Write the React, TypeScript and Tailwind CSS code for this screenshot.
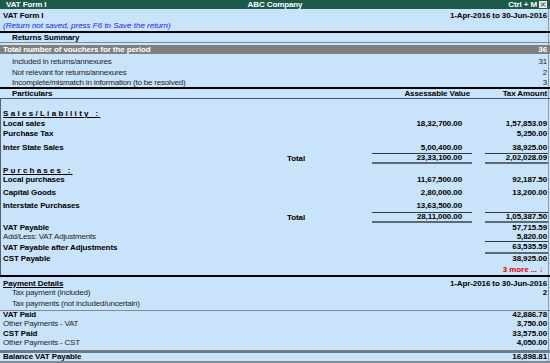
import React from "react";

const B = "font-bold tracking-[-0.1px] text-black";
const R = "font-normal tracking-[-0.2px] text-[#1e1e1e]";

type MainRowProps = {
  h: string;
  label?: React.ReactNode;
  total?: React.ReactNode;
  assess?: React.ReactNode;
  tax?: React.ReactNode;
  labelCls?: string;
  boxA?: boolean;
  boxT?: boolean;
  taxCls?: string;
};

const BOX = "border-t border-b-2 border-t-[#2f3a46] border-b-[#5d6975]";

function MainRow({ h, label, total, assess, tax, labelCls = B, boxA, boxT, taxCls = "" }: MainRowProps) {
  return (
    <div className={`flex ${h} leading-none`}>
      <div className={`flex min-w-0 flex-1 items-center pl-[2px] whitespace-nowrap ${labelCls}`}>{label}</div>
      <div className={`flex w-[85px] items-center ${B}`}>{total}</div>
      <div className={`flex w-[100px] items-center justify-end pr-[10px] ${B} ${boxA ? BOX : ""}`}>{assess}</div>
      <div className="w-[13px]" />
      <div className={`flex w-[63px] items-center justify-end pr-[1px] whitespace-nowrap ${B} ${boxT ? BOX : ""} ${taxCls}`}>{tax}</div>
    </div>
  );
}

function SimpleRow({ h, left, right, leftCls, rightCls = B, pl }: { h: string; left?: React.ReactNode; right?: React.ReactNode; leftCls: string; rightCls?: string; pl: string }) {
  return (
    <div className={`flex ${h} items-center justify-between leading-none whitespace-nowrap pr-[1px] ${pl}`}>
      <span className={leftCls}>{left}</span>
      <span className={rightCls}>{right}</span>
    </div>
  );
}

function CloseBox() {
  return (
    <svg width="8" height="7" viewBox="0 0 8 7" className="block">
      <rect x="0.5" y="0.5" width="7" height="6" fill="#d9e2de" stroke="#eef3f1" strokeWidth="1" />
      <path d="M2 1.5 L6 5.5 M6 1.5 L2 5.5" stroke="#2a4f44" strokeWidth="1" />
    </svg>
  );
}

export default function App() {
  return (
    <div className="h-[363px] w-[550px] overflow-hidden bg-[#c8e3fa] font-['Liberation_Sans',Arial,sans-serif] text-[8px]">
      {/* Title bar */}
      <div className="grid h-[9px] grid-cols-[1fr_auto_1fr] items-center bg-[#1e5a4a] leading-none text-white">
        <span className="pl-[6px] font-bold tracking-[-0.1px]">VAT Form I</span>
        <span className="font-bold tracking-[-0.1px]">ABC Company</span>
        <div className="flex items-center justify-end gap-[2px] pr-[3px]">
          <span className="font-bold tracking-[-0.1px]">Ctrl + M</span>
          <CloseBox />
        </div>
      </div>

      <div className="w-[549px] border-r border-r-[#8b9aa8]">
        <div className="h-[2px]" />
        <SimpleRow h="h-[10px]" pl="pl-[3px]" leftCls={B} left="VAT Form I" right="1-Apr-2016 to 30-Jun-2016" />
        <div className="flex h-[9px] items-center pl-[3px] leading-none">
          <span className="italic text-[#1c1ce0] tracking-[0px]">(Return not saved, press F6 to Save the return)</span>
        </div>
        <div className="h-[1px]" />
        <div className="-mr-[2px] h-[2px] bg-black" />
        <SimpleRow h="h-[9px]" pl="pl-[12px]" leftCls={B} left="Returns Summary" />
        <div className="-mr-[2px] h-[1px] bg-[#7e8c99]" />
        <div className="h-[2px]" />
        <div className="-mr-[2px] flex h-[9px] items-center justify-between bg-[#808080] pl-[3px] pr-[3px] leading-none text-white">
          <span className="font-bold tracking-[-0.1px]">Total number of vouchers for the period</span>
          <span className="font-bold tracking-[-0.1px]">36</span>
        </div>
        <div className="h-[3px]" />
        <SimpleRow h="h-[10px]" pl="pl-[12px]" leftCls={R} rightCls={R} left="Included in returns/annexures" right="31" />
        <SimpleRow h="h-[11px]" pl="pl-[12px]" leftCls={R} rightCls={R} left="Not relevant for returns/annexures" right="2" />
        <SimpleRow h="h-[9px]" pl="pl-[12px]" leftCls={R} rightCls={R} left="Incomplete/mismatch in information (to be resolved)" right="3" />
        <div className="-mr-[2px] h-[2px] bg-black" />

        <div className="flex h-[9px] leading-none">
          <div className={`flex flex-1 items-center pl-[12px] ${B}`}>Particulars</div>
          <div className={`flex w-[100px] items-center justify-end pr-[2px] ${B}`}>Assessable Value</div>
          <div className="w-[13px]" />
          <div className={`flex w-[63px] items-center justify-end pr-[1px] ${B}`}>Tax Amount</div>
        </div>
        <div className="-mr-[2px] h-[1px] bg-[#4d5863]" />

        {/* Main section */}
        <div className="border-l border-l-[#56616c]">
          <div className="h-[10px]" />
          <MainRow
            h="h-[10px]"
            label={<span className="underline decoration-1 tracking-[2.3px]">Sales/Liability :</span>}
          />
          <MainRow h="h-[10px]" label="Local sales" assess="18,32,700.00" tax="1,57,853.09" />
          <MainRow h="h-[10px]" label="Purchase Tax" tax="5,250.00" />
          <div className="h-[3px]" />
          <MainRow h="h-[11px]" label="Inter State Sales" assess="5,00,400.00" tax="38,925.00" />
          <MainRow h="h-[11px]" total="Total" assess="23,33,100.00" tax="2,02,028.09" boxA boxT />
          <div className="h-[2px]" />
          <MainRow
            h="h-[9px]"
            label={<span className="underline decoration-1 tracking-[2.2px]">Purchases :</span>}
          />
          <MainRow h="h-[9px]" label="Local purchases" assess="11,67,500.00" tax="92,187.50" />
          <div className="h-[3px]" />
          <MainRow h="h-[11px]" label="Capital Goods" assess="2,80,000.00" tax="13,200.00" />
          <div className="h-[2px]" />
          <MainRow h="h-[11px]" label="Interstate Purchases" assess="13,63,500.00" />
          <div className="h-[1px]" />
          <MainRow h="h-[11px]" total="Total" assess="28,11,000.00" tax="1,05,387.50" boxA boxT />
          <MainRow h="h-[9px]" label="VAT Payable" tax="57,715.59" />
          <MainRow h="h-[9px]" label="Add/Less: VAT Adjustments" labelCls={R} tax="5,820.00" />
          <MainRow h="h-[13px]" label="VAT Payable after Adjustments" tax="63,535.59" boxT />
          <MainRow h="h-[10px]" label="CST Payable" tax="38,925.00" />
          <MainRow h="h-[11px]" tax={<span className="pr-[4px] text-[#e00000]">3 more ... ↓</span>} />
        </div>
        <div className="-mr-[2px] h-[2px] bg-black" />
        <div className="h-[2px]" />
        <SimpleRow
          h="h-[9px]"
          pl="pl-[3px]"
          leftCls={`${B} underline decoration-1`}
          left="Payment Details"
          right="1-Apr-2016 to 30-Jun-2016"
        />
        <SimpleRow h="h-[9px]" pl="pl-[12px]" leftCls={R} left="Tax payment (included)" right="2" />
        <SimpleRow h="h-[13px]" pl="pl-[12px]" leftCls={R} left="Tax payments (not included/uncertain)" />
        <div className="-mr-[2px] h-[1px] bg-[#7e8c99]" />
        <SimpleRow h="h-[8px]" pl="pl-[3px]" leftCls={B} left="VAT Paid" right="42,886.78" />
        <SimpleRow h="h-[10px]" pl="pl-[3px]" leftCls={R} left="Other Payments - VAT" right="3,750.00" />
        <SimpleRow h="h-[9px]" pl="pl-[3px]" leftCls={B} left="CST Paid" right="33,575.00" />
        <SimpleRow h="h-[9px]" pl="pl-[3px]" leftCls={R} left="Other Payments - CST" right="4,050.00" />
        <div className="h-[3px]" />
        <div className="-mr-[2px] h-[3px] bg-[#6e7a86]" />
        <SimpleRow h="h-[8px]" pl="pl-[3px]" leftCls={B} left="Balance VAT Payable" right="16,898.81" />
        <div className="-mr-[2px] h-[2px] bg-[#7e8c99]" />
      </div>
    </div>
  );
}
